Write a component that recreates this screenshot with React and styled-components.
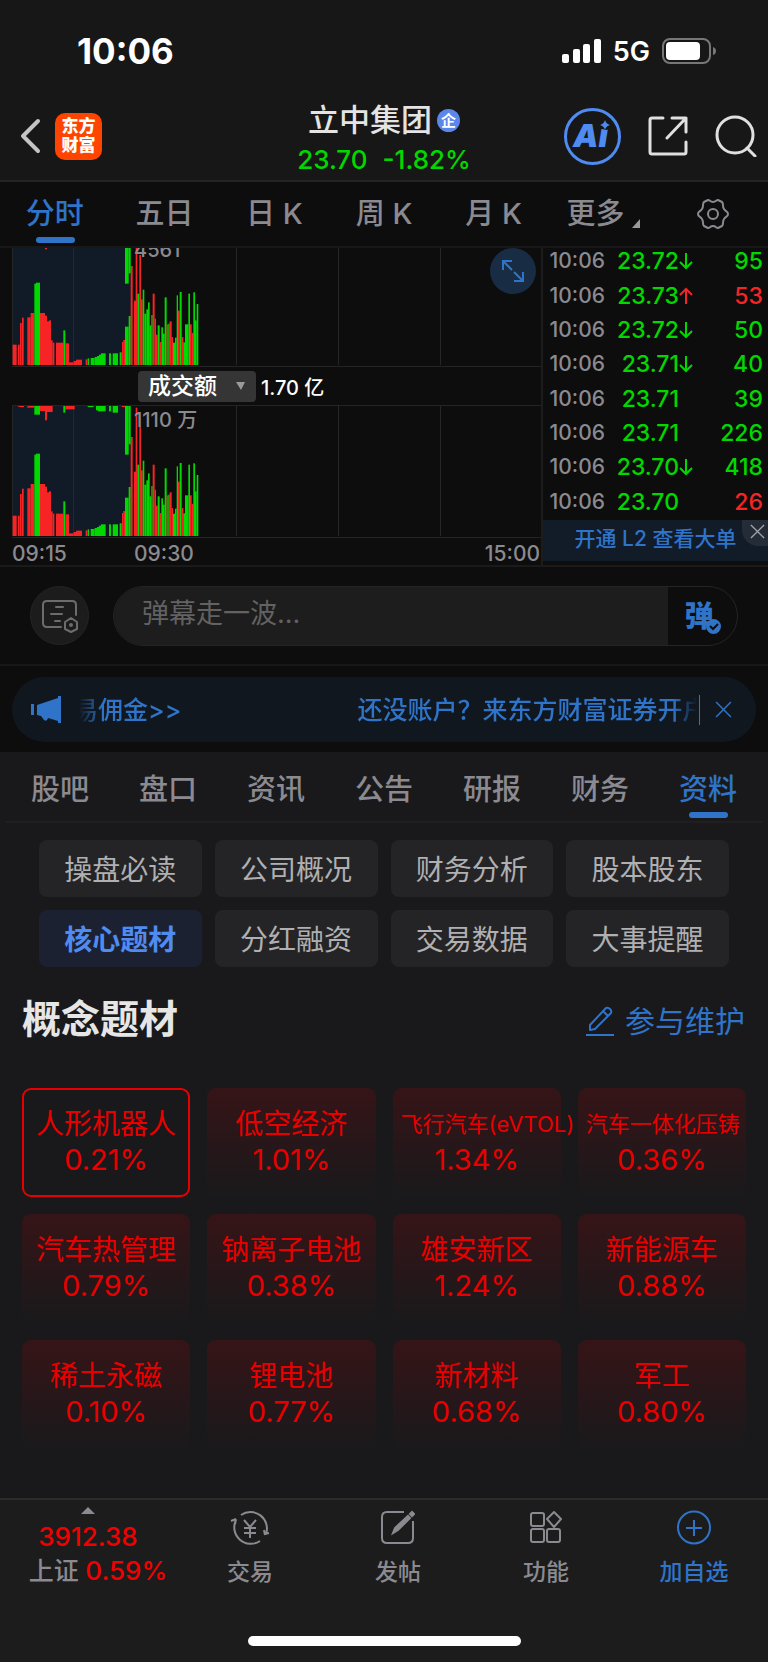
import { useState } from 'react';
import styled, { createGlobalStyle, ThemeProvider, css } from 'styled-components';

const GlobalStyle = createGlobalStyle`
	* {
		box-sizing: border-box;
	}
	body {
		margin: 0;
		font-family: Inter, 'Noto Sans CJK SC', sans-serif;
	}
	button, input, select {
		font-family: inherit;
		margin: 0;
		padding: 0;
		border: none;
		background: none;
		color: inherit;
	}
	button {
		cursor: pointer;
	}
	svg {
		display: block;
		flex: none;
	}
	h1, h2, p {
		margin: 0;
	}
`;

const palette = {
	blue: '#2f74c8',
	bright: '#4f8bf0',
	green: '#00d800',
	red: '#f62424',
	deepRed: '#e80000',
	gray: '#8b8a90',
	line: '#242426',
	black: '#0d0d0d',
	panel: '#19191b',
};

const Page = styled.div`
	background: ${({ theme }) => theme.panel};
	color: ${({ theme }) => theme.gray};
	overflow: hidden;
`;

// 상단 상태바 / header
const StatusBar = styled.div`
	display: flex;
	align-items: center;
	justify-content: space-between;
	height: 92px;
	padding: 10px 52px 0 77px;
	background: #171717;
	color: #fff;
`;

const Clock = styled.span`
	font-size: 35px;
	font-weight: 700;
`;

const StatusIcons = styled.div`
	display: flex;
	align-items: center;
	gap: 12px;
	font-size: 27px;
	font-weight: 600;
`;

const Header = styled.header`
	display: grid;
	grid-template-columns: 1fr auto 1fr;
	align-items: center;
	height: 90px;
	padding: 0 11px;
	background: #171717;
	border-bottom: 2px solid ${({ theme }) => theme.line};
	color: #e4e4e4;
`;

const HeaderSide = styled.div`
	display: flex;
	align-items: center;
	justify-content: ${({ $end }) => ($end ? 'flex-end' : 'flex-start')};
	gap: ${({ $end }) => ($end ? 27 : 12)}px;
	padding-left: ${({ $end }) => ($end ? 0 : 7)}px;
`;

const Logo = styled.div`
	display: grid;
	place-content: center;
	width: 47px;
	height: 47px;
	border-radius: 10px;
	background: #ff4400;
	color: #fff;
	font-size: 17px;
	line-height: 19px;
	font-weight: 900;
`;

const StockTitle = styled.div`
	display: grid;
	justify-items: center;
	padding-top: 8px;
`;

const StockName = styled.h1`
	display: flex;
	align-items: center;
	gap: 5px;
	font-size: 31px;
	line-height: 40px;
	font-weight: 500;
`;

const Badge = styled.span`
	display: grid;
	place-items: center;
	width: 23px;
	height: 23px;
	border-radius: 50%;
	background: #5c87ea;
	color: #fff;
	font-size: 15px;
	line-height: 15px;
	font-weight: 700;
`;

const StockPrice = styled.p`
	display: flex;
	gap: 15px;
	font-size: 26px;
	line-height: 40px;
	font-weight: 500;
	color: ${({ theme }) => theme.green};
`;

// 탭
const Tabs = styled.nav`
	display: grid;
	grid-template-columns: repeat(7, 1fr);
	${({ $dark }) =>
		$dark
			? css`
					height: 66px;
					background: #0d0d0d;
					border-bottom: 2px solid #181818;
			  `
			: css`
					height: 71px;
					margin: 0 6px;
					border-bottom: 2px solid #1f1f21;
			  `}
`;

const Tab = styled.button`
	position: relative;
	display: flex;
	align-items: center;
	justify-content: center;
	padding-bottom: ${({ $raised }) => ($raised ? 6 : 0)}px;
	font-size: 29px;
	font-weight: 500;
	color: ${({ theme, $active }) => ($active ? theme.blue : theme.gray)};
	svg {
		margin: 24px 0 0 8px;
	}
	&[aria-label] {
		padding: 0;
	}
	&[aria-label] svg {
		margin: 0;
	}
	${({ $active }) =>
		$active &&
		css`
			&::after {
				content: '';
				position: absolute;
				left: 50%;
				bottom: 3px;
				width: 39px;
				height: 6px;
				margin-left: -19px;
				border-radius: 3px;
				background: ${({ theme }) => theme.blue};
			}
		`}
`;

// 차트
const Market = styled.section`
	display: flex;
	height: 319px;
	background: ${({ theme }) => theme.black};
	border-bottom: 2px solid #1a1a1a;
`;

const Charts = styled.div`
	flex: 1;
	min-width: 0;
	font-size: 20px;
	font-weight: 500;
`;

const Plot = styled.div`
	position: relative;
	display: flex;
	align-items: flex-end;
	height: ${({ $tall }) => ($tall ? 132 : 119)}px;
	margin-left: 12px;
	padding-bottom: 1px;
	border-bottom: 1px solid ${({ theme }) => theme.line};
	overflow: hidden;
`;

const PlotLabel = styled.span`
	position: absolute;
	left: 122px;
	top: ${({ $tall }) => ($tall ? 2 : -10)}px;
	line-height: 24px;
`;

const ExpandButton = styled.button`
	position: absolute;
	top: 0;
	right: 5px;
	display: grid;
	place-items: center;
	width: 46px;
	height: 46px;
	border-radius: 50%;
	background: #182c43;
	color: ${({ theme }) => theme.blue};
`;

const Indicator = styled.div`
	display: flex;
	align-items: center;
	gap: 5px;
	height: 39px;
	margin-left: 12px;
	padding-left: 126px;
	border-bottom: 1px solid ${({ theme }) => theme.line};
	color: #fff;
`;

const SelectBox = styled.label`
	position: relative;
	svg {
		position: absolute;
		right: 11px;
		top: 11px;
		pointer-events: none;
	}
`;

const Select = styled.select`
	appearance: none;
	display: block;
	width: 118px;
	height: 31px;
	padding: 0 10px;
	border-radius: 4px;
	background: #353535;
	font-size: 23px;
	line-height: 31px;
	font-weight: 500;
`;

const TimeAxis = styled.div`
	display: flex;
	padding: 4px 1px 0 12px;
	font-size: 21px;
	line-height: 24px;
	span {
		width: 122px;
	}
	span:last-child {
		width: auto;
		margin-left: auto;
	}
`;

const Side = styled.aside`
	width: 227px;
	border-left: 2px solid #1c1c1c;
`;

const TickList = styled.div`
	height: 272px;
	overflow: hidden;
`;

const TickTable = styled.table`
	width: 100%;
	height: 275px;
	margin-top: -4px;
	border-collapse: collapse;
	font-weight: 500;
	font-size: 23px;
	line-height: 24px;
	td {
		padding: 0;
	}
`;

const TickTime = styled.td`
	width: 62px;
	text-align: right;
	font-size: 21px;
`;

const TickPrice = styled.td`
	width: 74px;
	text-align: right;
	color: ${({ theme }) => theme.green};
`;

const TickArrow = styled.td`
	width: 16px;
	color: ${({ theme, $up }) => ($up ? theme.red : theme.green)};
`;

const TickVolume = styled.td`
	text-align: right;
	color: ${({ theme, $up }) => ($up ? theme.red : theme.green)};
	&& {
		padding-right: 5px;
	}
`;

const LevelTwo = styled.div`
	position: relative;
	display: grid;
	place-items: center;
	height: 41px;
	padding-bottom: 4px;
	background: #111c28;
	a {
		font-size: 21px;
		line-height: 36px;
		font-weight: 500;
		text-decoration: none;
		color: ${({ theme }) => theme.blue};
	}
`;

const LevelClose = styled.button`
	position: absolute;
	top: 0;
	right: 0;
	display: grid;
	place-items: center;
	width: 26px;
	height: 26px;
	padding: 0 0 4px 4px;
	border-bottom-left-radius: 16px;
	background: #242d37;
	color: #a0a4a8;
`;

// 弹幕 입력
const Danmaku = styled.form`
	display: flex;
	align-items: center;
	gap: 24px;
	height: 99px;
	padding: 0 30px;
	background: ${({ theme }) => theme.black};
	border-bottom: 2px solid #181818;
`;

const RoundButton = styled.button`
	display: grid;
	place-items: center;
	width: 59px;
	height: 59px;
	border-radius: 50%;
	border: 1px solid #242424;
	background: #1c1c1c;
	color: #6c6c6c;
`;

const DanmakuBox = styled.div`
	flex: 1;
	display: flex;
	height: 60px;
	border: 1px solid #242424;
	border-radius: 30px;
	overflow: hidden;
`;

const DanmakuInput = styled.input`
	flex: 1;
	min-width: 0;
	padding: 0 28px 5px;
	background: #1d1d1d;
	font-size: 27px;
	outline: none;
	&::placeholder {
		color: #626262;
		opacity: 1;
	}
`;

const DanmakuToggle = styled.button`
	position: relative;
	width: 69px;
	padding: 0 7px 4px 0;
	font-size: 29px;
	font-weight: 900;
	color: ${({ theme }) => theme.blue};
	svg {
		position: absolute;
		left: 38px;
		top: 32px;
	}
`;

// 공지
const NoticeWrap = styled.div`
	padding: 11px 12px 10px;
	background: ${({ theme }) => theme.black};
`;

const Notice = styled.div`
	display: flex;
	align-items: center;
	height: 65px;
	padding: 0 24px 0 19px;
	border-radius: 33px;
	background: #10171f;
	color: ${({ theme }) => theme.blue};
`;

const Marquee = styled.a`
	flex: 1;
	min-width: 0;
	display: flex;
	gap: 176px;
	margin-left: 17px;
	overflow: hidden;
	white-space: nowrap;
	font-size: 25px;
	line-height: 40px;
	font-weight: 500;
	color: inherit;
	text-decoration: none;
	mask-image: linear-gradient(90deg, transparent, #000 24px, #000 calc(100% - 24px), transparent);
	span:first-child {
		margin-left: -6px;
	}
`;

const NoticeClose = styled.button`
	margin-left: 2px;
	padding-left: 15px;
	border-left: 1px solid;
	height: 30px;
`;

// 자료 메뉴
const MenuGrid = styled.div`
	display: grid;
	grid-template-columns: repeat(4, 1fr);
	gap: 13px;
	padding: 17px 39px 0;
`;

const MenuButton = styled.button`
	height: 57px;
	padding-bottom: 1px;
	border-radius: 8px;
	font-size: 28px;
	font-weight: ${({ $active }) => ($active ? 700 : 400)};
	color: ${({ theme, $active }) => ($active ? theme.bright : '#b0b0b2')};
	background: ${({ $active }) => ($active ? '#1b2130' : '#242426')};
`;

const SectionHead = styled.div`
	display: flex;
	align-items: center;
	justify-content: space-between;
	height: 108px;
	margin-bottom: 13px;
	padding: 0 23px 0 22px;
	h2 {
		padding-bottom: 10px;
		font-size: 39px;
		font-weight: 700;
		color: #e6e6e6;
	}
	a {
		display: flex;
		align-items: center;
		gap: 11px;
		padding-bottom: 4px;
		font-size: 30px;
		color: ${({ theme }) => theme.blue};
		text-decoration: none;
	}
	svg {
		margin-top: 3px;
	}
`;

const CardGrid = styled.div`
	display: grid;
	grid-template-columns: repeat(4, minmax(0, 1fr));
	gap: 17px;
	padding: 0 22px 49px;
`;

const Card = styled.button`
	display: block;
	height: 109px;
	padding: 0 8px 2px;
	border-radius: 9px;
	text-align: center;
	line-height: 36px;
	color: ${({ theme }) => theme.deepRed};
	background: linear-gradient(#361417, #19191b);
	${({ $active }) =>
		$active &&
		css`
			padding: 0 6px 2px;
			background: none;
			border: 2px solid ${({ theme }) => theme.deepRed};
		`}
`;

const CardName = styled.div`
	font-size: ${({ $small }) => ($small ? 22 : 28)}px;
	white-space: nowrap;
`;

const CardRate = styled.div`
	font-size: 29px;
`;

// 하단 바
const Footer = styled.footer`
	height: 164px;
	background: #1c1c1c;
	border-top: 2px solid #2c2c2c;
`;

const FooterNav = styled.nav`
	display: grid;
	grid-template-columns: 176fr repeat(4, 148fr);
	height: 136px;
`;

const FooterItem = styled.button`
	display: flex;
	flex-direction: column;
	align-items: center;
	gap: 9px;
	padding-top: 10px;
	font-size: 23px;
	line-height: 34px;
	font-weight: 500;
	color: ${({ theme, $blue }) => ($blue ? theme.blue : theme.gray)};
`;

const IndexItem = styled.button`
	display: flex;
	flex-direction: column;
	align-items: center;
	padding: 7px 0 0 20px;
	font-size: 25px;
	line-height: 34px;
	font-weight: 500;
	color: ${({ theme }) => theme.gray};
	b {
		font-weight: 500;
		font-size: 26px;
		color: #f00000;
	}
`;

const IndexTop = styled.span`
	display: grid;
	justify-items: center;
	padding-right: 20px;
	b {
		padding-top: 6px;
	}
`;

const HomeBar = styled.div`
	width: 273px;
	height: 10px;
	margin: 0 auto;
	border-radius: 5px;
	background: #fff;
`;

const R = '#f62424';
const G = '#00d800';
// x, width, top, bottom, color : 3 units per pixel, 390 is the base line
const bars = [
	[38, 12, 329, 390, R], [54, 5, 329, 390, R], [60, 5, 264, 390, R], [66, 5, 248, 390, R],
	[82, 10, 247, 390, R], [92, 11, 234, 390, R], [103, 5, 146, 390, G], [108, 12, 143, 390, G],
	[120, 15, 234, 390, R], [135, 6, 242, 390, R], [141, 6, 259, 390, R], [147, 6, 256, 390, R],
	[153, 5, 316, 390, R], [158, 5, 323, 390, R], [168, 22, 323, 390, R], [190, 6, 286, 390, G],
	[196, 11, 325, 390, R], [207, 14, 382, 390, R], [221, 7, 378, 390, R], [228, 18, 374, 390, R],
	[257, 5, 373, 390, R], [263, 4, 370, 390, G], [272, 12, 369, 390, G], [284, 7, 366, 390, G],
	[291, 6, 363, 390, G], [297, 6, 359, 390, G], [303, 14, 355, 390, G], [327, 6, 355, 390, G],
	[338, 16, 355, 390, G], [359, 6, 352, 390, G], [366, 4, 321, 390, R], [370, 5, 315, 390, R],
	[375, 11, 275, 390, G], [386, 6, 243, 390, G], [392, 6, 93, 390, R], [402, 6, 197, 390, R],
	[407, 5, 5, 390, R], [412, 6, 176, 390, G], [418, 5, 60, 390, R], [423, 5, 193, 390, R],
	[428, 5, 164, 390, G], [433, 6, 236, 390, G], [439, 5, 223, 390, G], [444, 5, 202, 390, G],
	[449, 5, 271, 390, G], [454, 4, 240, 390, G], [458, 6, 176, 390, R], [464, 4, 251, 390, R],
	[468, 5, 299, 390, R], [473, 6, 271, 390, G], [479, 5, 321, 390, R], [484, 5, 277, 390, G],
	[489, 5, 296, 390, G], [494, 6, 187, 390, G], [500, 5, 268, 390, R], [505, 4, 266, 390, G],
	[509, 6, 259, 390, R], [515, 4, 306, 390, R], [519, 6, 323, 390, G], [525, 5, 308, 390, G],
	[530, 4, 181, 390, G], [534, 5, 227, 390, R], [539, 6, 171, 390, G], [545, 5, 306, 390, R],
	[550, 5, 322, 390, G], [555, 10, 268, 390, G], [565, 5, 176, 390, G], [570, 5, 268, 390, R],
	[575, 5, 294, 390, R], [580, 5, 172, 390, G], [585, 5, 256, 390, G], [590, 5, 207, 390, G],
	// hanging from the top
	[55, 17, 0, 3, R], [82, 21, 0, 5, R], [103, 17, 0, 26, G], [120, 15, 0, 15, R],
	[135, 6, 0, 43, R], [141, 17, 0, 18, R], [190, 6, 0, 20, G], [196, 28, 0, 10, R],
	[263, 18, 0, 3, G], [288, 6, 0, 13, G], [294, 23, 0, 16, G], [327, 6, 0, 16, G],
	[338, 16, 0, 20, G], [365, 10, 0, 3, R], [375, 11, 0, 146, G], [386, 6, 0, 115, G],
];

const VolumePlot = () => (
	<svg width="100%" height="130">
		<rect x="0" y="0" width="119" height="130" fill="#111b27" />
		{[0, 61, 224, 326, 428].map((x) => (
			<rect key={x} x={x} y="0" width="1" height="130" fill="#262626" />
		))}
		<g transform="scale(0.33333) translate(-36 0)">
			{bars.map(([x, w, top, bottom, color], i) => (
				<rect key={i} x={x} y={top} width={w} height={bottom - top} fill={color} />
			))}
		</g>
	</svg>
);

const Cross = ({ size }) => (
	<svg width={size} height={size} viewBox="0 0 16 16" fill="none" stroke="currentColor" strokeWidth="1.4">
		<path d="M1 1l14 14M15 1L1 15" />
	</svg>
);

const Arrow = ({ up }) => (
	<svg width="14" height="18" viewBox="0 0 14 18" fill="none" stroke="currentColor" strokeWidth="2">
		<path d={up ? 'M7 17V2M1 8l6-6 6 6' : 'M7 1v15M1 10l6 6 6-6'} />
	</svg>
);

const ticks = [
	['23.72', 'down', '95'],
	['23.73', 'up', '53', true],
	['23.72', 'down', '50'],
	['23.71', 'down', '40'],
	['23.71', '', '39'],
	['23.71', '', '226'],
	['23.70', 'down', '418'],
	['23.70', '', '26', true],
];

const infoTabs = ['股吧', '盘口', '资讯', '公告', '研报', '财务', '资料'];

const menus = [
	'操盘必读', '公司概况', '财务分析', '股本股东',
	'核心题材', '分红融资', '交易数据', '大事提醒',
];

const concepts = [
	['人形机器人', '0.21%'],
	['低空经济', '1.01%'],
	['飞行汽车(eVTOL)', '1.34%'],
	['汽车一体化压铸', '0.36%'],
	['汽车热管理', '0.79%'],
	['钠离子电池', '0.38%'],
	['雄安新区', '1.24%'],
	['新能源车', '0.88%'],
	['稀土永磁', '0.10%'],
	['锂电池', '0.77%'],
	['新材料', '0.68%'],
	['军工', '0.80%'],
];

function App() {
	const [period, setPeriod] = useState('分时');
	const [info, setInfo] = useState('资料');
	const [menu, setMenu] = useState('核心题材');
	const [concept, setConcept] = useState('人形机器人');

	return (
		<ThemeProvider theme={palette}>
			<GlobalStyle />
			<Page>
				<StatusBar>
					<Clock>10:06</Clock>
					<StatusIcons>
						<svg width="39" height="24" fill="#fff">
							<rect x="0" y="15" width="7" height="9" rx="2" />
							<rect x="11" y="10" width="7" height="14" rx="2" />
							<rect x="21" y="5" width="7" height="19" rx="2" />
							<rect x="32" y="0" width="7" height="24" rx="2" />
						</svg>
						5G
						<svg width="54" height="26" fill="none">
							<rect x="1" y="1" width="47" height="24" rx="7" stroke="#777" strokeWidth="2" />
							<rect x="4" y="4" width="34" height="18" rx="4" fill="#fff" />
							<path d="M51 9q3 1 3 4t-3 4z" fill="#777" />
						</svg>
					</StatusIcons>
				</StatusBar>

				<Header>
					<HeaderSide>
						<button aria-label="返回">
							<svg width="25" height="36" fill="none" stroke="#c4c4c4" strokeWidth="4" strokeLinecap="round" strokeLinejoin="round">
								<path d="M20 3L5 18l15 15" />
							</svg>
						</button>
						<Logo>
							<span>东方</span>
							<span>财富</span>
						</Logo>
					</HeaderSide>
					<StockTitle>
						<StockName>
							立中集团<Badge>企</Badge>
						</StockName>
						<StockPrice>
							<span>23.70</span>
							<span>-1.82%</span>
						</StockPrice>
					</StockTitle>
					<HeaderSide $end>
						<button aria-label="AI">
							<svg width="57" height="57" fill="#4f8bf0">
								<circle cx="28.5" cy="28.5" r="27" fill="none" stroke="#4f8bf0" strokeWidth="3" />
								<text x="9" y="39" fontSize="32" fontWeight="900" fontStyle="italic">
									Ai
								</text>
								<circle cx="42" cy="16" r="6" fill="#171717" />
								<path d="M41 12q1 4 5 5-4 1-5 5-1-4-5-5 4-1 5-5z" />
							</svg>
						</button>
						<button aria-label="分享">
							<svg width="40" height="40" fill="none" stroke="#e0e0e0" strokeWidth="3" strokeLinecap="round" strokeLinejoin="round">
								<path d="M15 2H4q-2 0-2 2v32q0 2 2 2h32q2 0 2-2V26M24 2h14v14M38 2L19 22" />
							</svg>
						</button>
						<button aria-label="搜索">
							<svg width="42" height="42" fill="none" stroke="#e0e0e0" strokeWidth="3" strokeLinecap="round">
								<circle cx="20" cy="20" r="18" />
								<path d="M32 33l8 8" />
							</svg>
						</button>
					</HeaderSide>
				</Header>

				<Tabs $dark>
					{['分时', '五日', '日 K', '周 K', '月 K', '更多'].map((name) => (
						<Tab key={name} $raised $active={period === name} onClick={() => setPeriod(name)}>
							{name}
							{name === '更多' && (
								<svg width="8" height="9" fill="#9a9a9e">
									<path d="M8 0v9H0z" />
								</svg>
							)}
						</Tab>
					))}
					<Tab aria-label="设置">
						<svg width="32" height="32" viewBox="0 0 32 32" fill="none" stroke="currentColor" strokeWidth="2" strokeLinejoin="round">
							<path d="M11 2C13 2 13 4 16 4S19 2 21 2L25 4C27 6 25 8 27 11S31 13 31 16 29 18 27 21 27 26 25 28L21 30C19 30 19 28 16 28S13 30 11 30L7 28C5 26 7 24 5 21S1 19 1 16 3 14 5 11 5 6 7 4Z" />
							<circle cx="16" cy="16" r="5" />
						</svg>
					</Tab>
				</Tabs>

				<Market>
					<Charts>
						<Plot>
							<VolumePlot />
							<PlotLabel>4561</PlotLabel>
							<ExpandButton aria-label="全屏">
								<svg width="24" height="24" fill="none" stroke="currentColor" strokeWidth="2">
									<path d="M2 11V2h9M2 2l9 9M22 13v9h-9M22 22l-9-9" />
								</svg>
							</ExpandButton>
						</Plot>
						<Indicator>
							<SelectBox>
								<Select aria-label="指标">
									<option>成交额</option>
									<option>成交量</option>
								</Select>
								<svg width="9" height="9" fill="#9a9a9e">
									<path d="M0 0h9L5 8z" />
								</svg>
							</SelectBox>
							1.70 亿
						</Indicator>
						<Plot $tall>
							<VolumePlot />
							<PlotLabel $tall>1110 万</PlotLabel>
						</Plot>
						<TimeAxis>
							<span>09:15</span>
							<span>09:30</span>
							<span>15:00</span>
						</TimeAxis>
					</Charts>
					<Side>
						<TickList>
							<TickTable>
								<tbody>
									{ticks.map(([price, dir, volume, up], i) => (
										<tr key={i}>
											<TickTime>10:06</TickTime>
											<TickPrice>{price}</TickPrice>
											<TickArrow $up={dir === 'up'}>{dir && <Arrow up={dir === 'up'} />}</TickArrow>
											<TickVolume $up={up}>{volume}</TickVolume>
										</tr>
									))}
								</tbody>
							</TickTable>
						</TickList>
						<LevelTwo>
							<a href="#l2">开通 L2 查看大单</a>
							<LevelClose aria-label="关闭">
								<Cross size={15} />
							</LevelClose>
						</LevelTwo>
					</Side>
				</Market>

				<Danmaku onSubmit={(e) => e.preventDefault()}>
					<RoundButton type="button" aria-label="弹幕设置">
						<svg width="36" height="34" fill="none" stroke="currentColor" strokeWidth="2" strokeLinecap="round">
							<path d="M19 28H5q-4 0-4-4V6q0-4 4-4h25q4 0 4 4v10M14 8h7M9 15h11M13 22h5" />
							<path d="M29 19l6 4v7l-6 3-6-3v-7z" strokeLinejoin="round" />
							<circle cx="29" cy="26" r="1" />
						</svg>
					</RoundButton>
					<DanmakuBox>
						<DanmakuInput aria-label="弹幕" placeholder="弹幕走一波..." />
						<DanmakuToggle type="button">
							弹
							<svg width="15" height="15" viewBox="0 0 15 15">
								<circle cx="7.5" cy="7.5" r="7.5" fill="#2f74c8" />
								<path d="M4 7l3 3 5-5" fill="none" stroke="#0d0d0d" strokeWidth="2" />
							</svg>
						</DanmakuToggle>
					</DanmakuBox>
				</Danmaku>

				<NoticeWrap>
					<Notice>
						<svg width="31" height="27" fill="currentColor">
							<path d="M0 8h3v11H0zM6 9L27 2V0h3v27h-3v-2l-10-3q-1 4-4 2l-3-4-4-1z" />
						</svg>
						<Marquee href="#open">
							<span>易佣金&gt;&gt;</span>
							<span>还没账户？来东方财富证券开户</span>
						</Marquee>
						<NoticeClose aria-label="关闭">
							<Cross size={17} />
						</NoticeClose>
					</Notice>
				</NoticeWrap>

				<Tabs>
					{infoTabs.map((name) => (
						<Tab key={name} $active={info === name} onClick={() => setInfo(name)}>
							{name}
						</Tab>
					))}
				</Tabs>

				<MenuGrid>
					{menus.map((name) => (
						<MenuButton key={name} $active={menu === name} onClick={() => setMenu(name)}>
							{name}
						</MenuButton>
					))}
				</MenuGrid>

				<SectionHead>
					<h2>概念题材</h2>
					<a href="#edit">
						<svg width="28" height="30" fill="none" stroke="currentColor" strokeWidth="2" strokeLinejoin="round">
							<path d="M4 24V19L20 2q2-1 4 1t1 4L9 23zM17 5l5 5M0 29h28" />
						</svg>
						参与维护
					</a>
				</SectionHead>

				<CardGrid>
					{concepts.map(([name, rate]) => (
						<Card key={name} $active={concept === name} onClick={() => setConcept(name)}>
							<CardName $small={name.length > 5}>{name}</CardName>
							<CardRate>{rate}</CardRate>
						</Card>
					))}
				</CardGrid>

				<Footer>
					<FooterNav>
						<IndexItem>
							<IndexTop>
								<svg width="14" height="7" fill="#8b8a90">
									<path d="M7 0l7 7H0z" />
								</svg>
								<b>3912.38</b>
							</IndexTop>
							<span>
								上证 <b>0.59%</b>
							</span>
						</IndexItem>
						<FooterItem>
							<svg width="40" height="36" viewBox="0 0 40 36" fill="none" stroke="currentColor" strokeWidth="2">
								<path d="M11 5A16.5 16.5 0 0 1 36 24M35 25l-1-5M35 24l4-1M30 31A16.5 16.5 0 0 1 6 10M6 9l-5 2M6 9l-1 5" />
								<path d="M14 10l6 7 6-7M14 18h12M14 23h12M20 17v11" />
							</svg>
							交易
						</FooterItem>
						<FooterItem>
							<svg width="34" height="36" fill="none" stroke="currentColor" strokeWidth="2">
								<path d="M23 2H6Q1 2 1 7v21q0 5 5 5h21q5 0 5-5V11" />
								<path d="M12 23l2-5L27 6l2 2-12 12zM29 4l2-2 2 2-2 2z" fill="currentColor" />
							</svg>
							发帖
						</FooterItem>
						<FooterItem>
							<svg width="34" height="36" fill="none" stroke="currentColor" strokeWidth="2" strokeLinejoin="round">
								<rect x="2" y="3" width="13" height="13" rx="2" />
								<rect x="2" y="19" width="13" height="13" rx="2" />
								<rect x="18" y="19" width="13" height="13" rx="2" />
								<path d="M25 2l7 7-7 8-7-8z" />
							</svg>
							功能
						</FooterItem>
						<FooterItem $blue>
							<svg width="34" height="36" fill="none" stroke="currentColor" strokeWidth="2">
								<circle cx="17" cy="17.5" r="16" />
								<path d="M17 10v16M9 18h16" />
							</svg>
							加自选
						</FooterItem>
					</FooterNav>
					<HomeBar />
				</Footer>
			</Page>
		</ThemeProvider>
	);
}

export default App;
